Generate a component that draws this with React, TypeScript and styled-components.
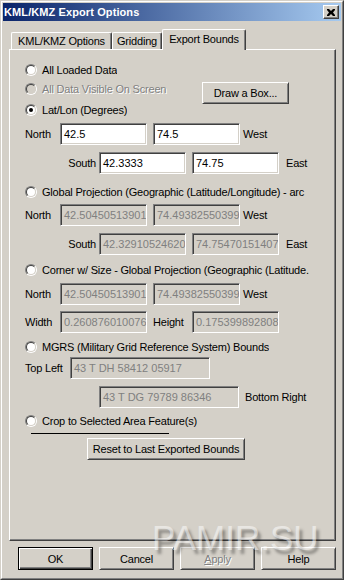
import React from "react";
import styled, { createGlobalStyle } from "styled-components";

const Global = createGlobalStyle`
  html, body { margin: 0; padding: 0; background: #d4d0c8; }
  body { font-family: "Liberation Sans", Arial, sans-serif; font-size: 11px; color: #000; letter-spacing: -0.2px; }
  * { box-sizing: border-box; }
`;

const Window = styled.div`
  width: 344px;
  height: 580px;
  position: relative;
  border: 1px solid;
  border-color: #d4d0c8 #404040 #404040 #d4d0c8;
  background: #d4d0c8;
  overflow: hidden;
`;

const Frame = styled.div`
  height: 100%;
  border: 1px solid;
  border-color: #fff #808080 #808080 #fff;
  padding: 1px;
  display: flex;
  flex-direction: column;
`;

const TitleBar = styled.div`
  height: 18px;
  flex: none;
  display: flex;
  align-items: center;
  justify-content: space-between;
  padding: 0 2px 0 1px;
  background: linear-gradient(to right, #0a246a, #a6caf0);
`;

const TitleText = styled.span`
  color: #fff;
  font-weight: bold;
  font-size: 11px;
  letter-spacing: 0.1px;
`;

const CloseBtn = styled.div`
  width: 16px;
  height: 14px;
  background: #d4d0c8;
  border: 1px solid;
  border-color: #fff #404040 #404040 #fff;
  box-shadow: inset -1px -1px #808080;
  display: flex;
  align-items: center;
  justify-content: center;
`;

const Body = styled.div`
  flex: 1;
  display: flex;
  flex-direction: column;
  padding: 8px 5px 0 6px;
`;

const TabRow = styled.div`
  display: flex;
  align-items: flex-end;
  height: 21px;
  padding-left: 2px;
  margin-bottom: -1px;
  position: relative;
  z-index: 1;
`;

const Tab = styled.div<{ $w: number; $active?: boolean }>`
  width: ${(p) => p.$w}px;
  height: ${(p) => (p.$active ? 21 : 17)}px;
  margin-bottom: ${(p) => (p.$active ? 0 : 1)}px;
  background: #d4d0c8;
  border-top: 1px solid #fff;
  border-left: 1px solid #fff;
  border-right: 1px solid #404040;
  border-radius: 2px 2px 0 0;
  box-shadow: inset -1px 0 #808080;
  display: flex;
  align-items: center;
  justify-content: center;
  padding-bottom: ${(p) => (p.$active ? 2 : 0)}px;
  white-space: nowrap;
`;

const Panel = styled.div`
  height: 492px;
  flex: none;
  border: 1px solid;
  border-color: #fff #404040 #404040 #fff;
  box-shadow: inset -1px -1px #808080;
  display: flex;
  flex-direction: column;
  padding-left: 15px;
`;

const Row = styled.div<{ $mt: number; $h?: number }>`
  display: flex;
  align-items: center;
  height: ${(p) => p.$h ?? 16}px;
  margin-top: ${(p) => p.$mt}px;
  white-space: nowrap;
`;

const Label = styled.span<{ $w?: number; $right?: boolean; $ml?: number; $pl?: number }>`
  width: ${(p) => (p.$w ? `${p.$w}px` : "auto")};
  flex: none;
  text-align: ${(p) => (p.$right ? "right" : "left")};
  padding-right: ${(p) => (p.$right ? 3 : 0)}px;
  padding-left: ${(p) => p.$pl ?? 0}px;
  margin-left: ${(p) => p.$ml ?? 0}px;
`;

const Field = styled.div<{ $w: number; $disabled?: boolean; $ml?: number }>`
  width: ${(p) => p.$w}px;
  height: 22px;
  flex: none;
  margin-left: ${(p) => p.$ml ?? 0}px;
  border: 1px solid;
  border-color: #808080 #fff #fff #808080;
  box-shadow: inset 1px 1px #404040, inset -1px -1px #d4d0c8;
  background: ${(p) => (p.$disabled ? "#d4d0c8" : "#fff")};
  color: ${(p) => (p.$disabled ? "#808080" : "#000")};
  padding: 0 0 0 3px;
  display: flex;
  align-items: center;
  overflow: hidden;
  letter-spacing: 0;
`;

const RadioWrap = styled.label<{ $disabled?: boolean; $w?: number }>`
  display: flex;
  align-items: center;
  gap: 5px;
  width: ${(p) => (p.$w ? `${p.$w}px` : "auto")};
  overflow: hidden;
  color: ${(p) => (p.$disabled ? "#808080" : "#000")};
  text-shadow: ${(p) => (p.$disabled ? "1px 1px #fff" : "none")};
  flex: none;
`;

const RadioOuter = styled.span`
  width: 12px;
  height: 12px;
  flex: none;
  border-radius: 50%;
  border: 1px solid;
  border-color: #808080 #fff #fff #808080;
  display: flex;
  align-items: center;
  justify-content: center;
`;

const RadioInner = styled.span<{ $disabled?: boolean }>`
  width: 10px;
  height: 10px;
  border-radius: 50%;
  border: 1px solid;
  border-color: #404040 #d4d0c8 #d4d0c8 #404040;
  background: ${(p) => (p.$disabled ? "#d4d0c8" : "#fff")};
  display: flex;
  align-items: center;
  justify-content: center;
`;

const Dot = styled.span`
  width: 4px;
  height: 4px;
  border-radius: 50%;
  background: #000;
`;

const Button = styled.div<{ $w: number; $h?: number; $ml?: number; $mt?: number; $default?: boolean; $disabled?: boolean }>`
  width: ${(p) => p.$w}px;
  height: ${(p) => p.$h ?? 23}px;
  flex: none;
  align-self: flex-start;
  margin-left: ${(p) => p.$ml ?? 0}px;
  margin-top: ${(p) => p.$mt ?? 0}px;
  background: #d4d0c8;
  border: 1px solid;
  border-color: ${(p) => (p.$default ? "#000" : "#fff #404040 #404040 #fff")};
  box-shadow: ${(p) =>
    p.$default
      ? "inset 1px 1px #fff, inset -1px -1px #404040, inset -2px -2px #808080"
      : "inset 1px 1px #d4d0c8, inset -1px -1px #808080"};
  display: flex;
  align-items: center;
  justify-content: center;
  color: ${(p) => (p.$disabled ? "#808080" : "#000")};
  text-shadow: ${(p) => (p.$disabled ? "1px 1px #fff" : "none")};
  white-space: nowrap;
`;

const Separator = styled.div`
  width: 138px;
  height: 1px;
  margin: 4px 0 0 6px;
  background: #000;
  flex: none;
`;

const Footer = styled.div`
  display: flex;
  justify-content: flex-end;
  gap: 6px;
  margin-top: 6px;
`;

const Mnemonic = styled.span`
  text-decoration: underline;
`;

const Watermark = styled.div`
  position: absolute;
  left: 151px;
  top: 519px;
  font-family: "Liberation Sans", Arial, sans-serif;
  font-size: 35px;
  line-height: 35px;
  letter-spacing: 0;
  color: rgba(255, 255, 255, 0.5);
  text-shadow: 3px 4px 3px rgba(0, 0, 0, 0.35);
  pointer-events: none;
  white-space: nowrap;
`;

function Radio({ label, checked, disabled, w }: { label: string; checked?: boolean; disabled?: boolean; w?: number }) {
  return (
    <RadioWrap $disabled={disabled} $w={w}>
      <RadioOuter>
        <RadioInner $disabled={disabled}>{checked && <Dot />}</RadioInner>
      </RadioOuter>
      <span>{label}</span>
    </RadioWrap>
  );
}

export default function App() {
  return (
    <>
      <Global />
      <Window>
        <Frame>
          <TitleBar>
            <TitleText>KML/KMZ Export Options</TitleText>
            <CloseBtn>
              <svg width="8" height="7" viewBox="0 0 8 7">
                <path d="M0 0h2l2 2 2-2h2v1L6 3.5 8 6v1H6L4 5 2 7H0V6l2-2.5L0 1z" fill="#000" />
              </svg>
            </CloseBtn>
          </TitleBar>
          <Body>
            <TabRow>
              <Tab $w={101}>KML/KMZ Options</Tab>
              <Tab $w={50}>Gridding</Tab>
              <Tab $w={84} $active>Export Bounds</Tab>
            </TabRow>
            <Panel>
              <Row $mt={12}>
                <Radio label="All Loaded Data" />
              </Row>
              <Row $mt={3}>
                <Radio label="All Data Visible On Screen" disabled w={177} />
                <Button $w={87} $h={22} $mt={1}>Draw a Box...</Button>
              </Row>
              <Row $mt={5}>
                <Radio label="Lat/Lon (Degrees)" checked />
              </Row>
              <Row $mt={5} $h={22}>
                <Label $w={35}>North</Label>
                <Field $w={87}>42.5</Field>
                <Field $w={87} $ml={6}>74.5</Field>
                <Label $ml={3}>West</Label>
              </Row>
              <Row $mt={7} $h={22}>
                <Label $w={74} $right>South</Label>
                <Field $w={87}>42.3333</Field>
                <Field $w={87} $ml={6}>74.75</Field>
                <Label $ml={7}>East</Label>
              </Row>
              <Row $mt={10}>
                <Radio label="Global Projection (Geographic (Latitude/Longitude) - arc" w={292} />
              </Row>
              <Row $mt={4} $h={22}>
                <Label $w={35}>North</Label>
                <Field $w={87} $disabled>42.50450513901</Field>
                <Field $w={87} $ml={6} $disabled>74.49382550399</Field>
                <Label $ml={3}>West</Label>
              </Row>
              <Row $mt={7} $h={22}>
                <Label $w={74} $right>South</Label>
                <Field $w={87} $disabled>42.32910524620</Field>
                <Field $w={87} $ml={6} $disabled>74.75470151407</Field>
                <Label $ml={7}>East</Label>
              </Row>
              <Row $mt={7}>
                <Radio label="Corner w/ Size - Global Projection (Geographic (Latitude." w={292} />
              </Row>
              <Row $mt={5} $h={22}>
                <Label $w={35}>North</Label>
                <Field $w={87} $disabled>42.50450513901</Field>
                <Field $w={87} $ml={6} $disabled>74.49382550399</Field>
                <Label $ml={3}>West</Label>
              </Row>
              <Row $mt={6} $h={22}>
                <Label $w={35}>Width</Label>
                <Field $w={87} $disabled>0.260876010076</Field>
                <Label $w={45} $pl={6}>Height</Label>
                <Field $w={87} $disabled>0.175399892808</Field>
              </Row>
              <Row $mt={6}>
                <Radio label="MGRS (Military Grid Reference System) Bounds" />
              </Row>
              <Row $mt={2} $h={22}>
                <Label $w={45}>Top Left</Label>
                <Field $w={140} $disabled>43 T DH 58412 05917</Field>
              </Row>
              <Row $mt={7} $h={22}>
                <Label $w={74} />
                <Field $w={140} $disabled>43 T DG 79789 86346</Field>
                <Label $ml={6}>Bottom Right</Label>
              </Row>
              <Row $mt={5}>
                <Radio label="Crop to Selected Area Feature(s)" />
              </Row>
              <Separator />
              <Row $mt={4} $h={22}>
                <Button $w={158} $h={22} $ml={62}>Reset to Last Exported Bounds</Button>
              </Row>
            </Panel>
            <Footer>
              <Button $w={75} $default>OK</Button>
              <Button $w={75}>Cancel</Button>
              <Button $w={75} $disabled><Mnemonic>A</Mnemonic>pply</Button>
              <Button $w={75}>Help</Button>
            </Footer>
          </Body>
        </Frame>
        <Watermark>PAMIR.SU</Watermark>
      </Window>
    </>
  );
}
